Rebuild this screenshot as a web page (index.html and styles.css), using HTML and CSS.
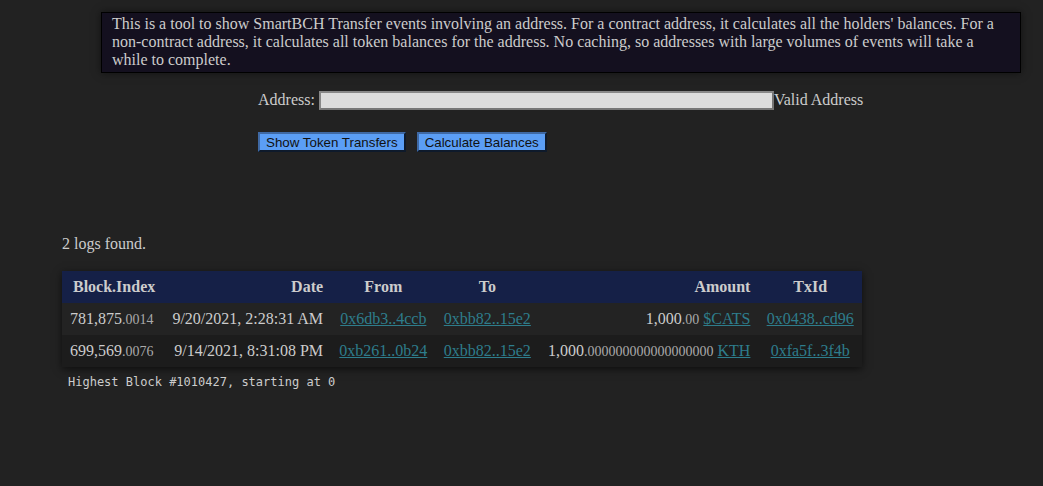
FILE: index.html
```html
<!DOCTYPE html>
<html lang="en">
<head>
    <meta charset="UTF-8">
    <title>SmartBCH Transfers</title>
    <link rel="stylesheet" href="styles.css">
</head>
<body>
    <div class="intro">
        This is a tool to show SmartBCH Transfer events involving an address. For a contract address, it calculates all the holders' balances. For a non-contract address, it calculates all token balances for the address. No caching, so addresses with large volumes of events will take a while to complete.
    </div>

    <div class="controls">
        <div class="address-row">
            <label for="address">Address:</label>
            <input id="address" type="text" value="">
            <span class="status">Valid Address</span>
        </div>
        <div class="buttons">
            <button>Show Token Transfers</button>
            <button>Calculate Balances</button>
        </div>
    </div>

    <div class="results">
        <p class="count">2 logs found.</p>
        <table class="logs">
            <thead>
                <tr>
                    <th class="left">Block.Index</th>
                    <th class="right">Date</th>
                    <th>From</th>
                    <th>To</th>
                    <th class="right">Amount</th>
                    <th>TxId</th>
                </tr>
            </thead>
            <tbody>
                <tr>
                    <td class="left">781,875<span class="frac">.0014</span></td>
                    <td class="right">9/20/2021, 2:28:31 AM</td>
                    <td><a href="#">0x6db3..4ccb</a></td>
                    <td><a href="#">0xbb82..15e2</a></td>
                    <td class="right">1,000<span class="frac">.00</span> <a href="#">$CATS</a></td>
                    <td><a href="#">0x0438..cd96</a></td>
                </tr>
                <tr>
                    <td class="left">699,569<span class="frac">.0076</span></td>
                    <td class="right">9/14/2021, 8:31:08 PM</td>
                    <td><a href="#">0xb261..0b24</a></td>
                    <td><a href="#">0xbb82..15e2</a></td>
                    <td class="right">1,000<span class="frac">.000000000000000000</span> <a href="#">KTH</a></td>
                    <td><a href="#">0xfa5f..3f4b</a></td>
                </tr>
            </tbody>
        </table>
        <pre class="footnote">Highest Block #1010427, starting at 0</pre>
    </div>
</body>
</html>
```

FILE: styles.css
```css
body {
    margin: 0;
    padding: 12px 0 0 0;
    background: #222;
    color: #ccc;
    font-family: 'Liberation Serif', 'Times New Roman', serif;
    font-size: 16px;
}

.intro {
    width: 898px;
    margin-left: 101px;
    padding: 2px 10px 3px 10px;
    background: #14101f;
    border: 1px solid #000;
    box-shadow: 0 0 8px rgba(0, 0, 0, 0.5);
    line-height: 18px;
}

.controls {
    margin-left: 258px;
    margin-top: 17px;
}

.address-row {
    display: flex;
    align-items: center;
    height: 20px;
}

.address-row label {
    margin-right: 4px;
}

.address-row input {
    width: 447px;
    height: 15px;
    padding: 0 2px;
    margin: 0;
    background: #dcdcdc;
    border: 2px inset #767676;
    border-top-color: #dcdcdc;
    border-left-color: #dcdcdc;
}

.buttons {
    display: flex;
    gap: 11px;
    margin-top: 22px;
}

.buttons button {
    height: 20px;
    padding: 0 6px;
    background: #5b9ef5;
    color: #111;
    border: 2px outset #2a4f7f;
    border-top-color: #1f3350;
    border-left-color: #1f3350;
    font-family: 'Liberation Sans', Arial, sans-serif;
    font-size: 13.33px;
    line-height: 15px;
}

.results {
    margin-left: 62px;
    margin-top: 83px;
}

.count {
    margin: 0 0 18px 0;
}

.logs {
    border-collapse: collapse;
    width: 800px;
    box-shadow: 0 2px 8px rgba(0, 0, 0, 0.6);
}

.logs th {
    background: #152047;
    height: 32px;
    padding: 0 8px;
    text-align: center;
    font-weight: bold;
}

.logs th.left {
    padding-left: 11px;
}

.logs td {
    height: 32px;
    padding: 0 8px;
    text-align: center;
    white-space: nowrap;
}

.logs .left {
    text-align: left;
}

.logs .right {
    text-align: right;
}

.logs tbody tr:nth-child(odd) {
    background: #232323;
}

.logs tbody tr:nth-child(even) {
    background: #1c1c1c;
}

.frac {
    font-size: 14px;
    color: #aaa;
}

.logs a {
    color: #2e7d8c;
}

.footnote {
    margin: 8px 0 0 6px;
    font-family: 'DejaVu Sans Mono', monospace;
    font-size: 12px;
    color: #ccc;
}
```
